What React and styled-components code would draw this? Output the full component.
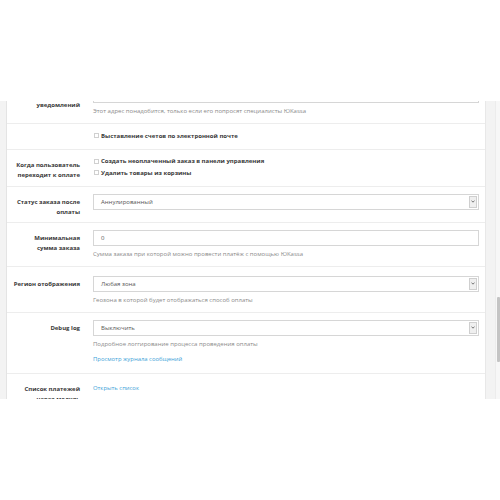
import React from 'react';
import styled, { createGlobalStyle } from 'styled-components';

const Global = createGlobalStyle`
  html, body { margin: 0; padding: 0; background: #fff; }
  body { font-family: "Open Sans", "Noto Sans", sans-serif; }
`;

const Page = styled.div`
  width: 500px;
  height: 500px;
  padding-top: 101px;
  box-sizing: border-box;
  background: #fff;
`;

const Frame = styled.div`
  height: 298px;
  display: flex;
  background: #f3f3f3;
  overflow: hidden;
`;

const Gutter = styled.div`
  width: 6px;
  flex: none;
`;

const Panel = styled.div`
  flex: none;
  width: 480px;
  box-sizing: border-box;
  background: #fff;
  border-left: 1px solid #e4e4e4;
  border-right: 1px solid #e8e8e8;
  overflow: hidden;
`;

const Scroller = styled.div`
  margin-top: -21px;
`;

const Side = styled.div`
  flex: 1;
  display: flex;
  justify-content: flex-end;
`;

const Track = styled.div`
  width: 4px;
  background: #f7f7f7;
  border-left: 1px solid #ececec;
  display: flex;
  flex-direction: column;
  padding-top: 196px;
`;

const Thumb = styled.div`
  width: 3px;
  height: 65px;
  margin-left: 1px;
  background: #c4c4c4;
  border-radius: 1px;
`;

const Row = styled.div`
  display: grid;
  grid-template-columns: 73px 1fr;
  column-gap: 13px;
  padding: ${(p) => p.$top ?? 6}px 6px 5px 0;
  border-bottom: 1px solid #ededed;
`;

const Label = styled.div`
  text-align: right;
  font-weight: 700;
  font-size: 6px;
  line-height: 10px;
  padding-top: 4px;
  color: #383838;
`;

const Control = styled.div`
  display: flex;
  flex-direction: column;
  min-width: 0;
`;

const Field = styled.div`
  height: 16px;
  margin-top: 1px;
  box-sizing: border-box;
  border: 1px solid #d6d6d6;
  background: #fff;
  display: flex;
  align-items: center;
  font-size: 6px;
  color: #555;
`;

const FieldValue = styled.span`
  flex: 1;
  padding-left: 7px;
`;

const Arrow = styled.span`
  width: 8px;
  height: 12px;
  margin-right: 1px;
  box-sizing: border-box;
  border: 1px solid #cfcfcf;
  background: #efefef;
  display: flex;
  align-items: center;
  justify-content: center;
`;

const Help = styled.div`
  font-size: 6px;
  line-height: 10px;
  color: #8a8a8a;
  margin: 3px 0 2px;
`;

const Link = styled.a`
  font-size: 5.9px;
  line-height: 10px;
  color: #3d9fd8;
  text-decoration: none;
  margin: 3px 0 4px;
`;

const Checks = styled.div`
  display: flex;
  flex-direction: column;
  margin-bottom: 2px;
`;

const Check = styled.label`
  display: flex;
  align-items: center;
  height: 11.5px;
  font-size: 6px;
  font-weight: 700;
  color: #383838;
`;

const Box = styled.span`
  width: 5px;
  height: 5px;
  box-sizing: border-box;
  border: 1px solid #d0d0d0;
  background: #fff;
  margin: 0 2px 0 1px;
  flex: none;
`;

const Chevron = () => (
  <svg width="4" height="3" viewBox="0 0 4 3">
    <path d="M0.5 0.6 L2 2.2 L3.5 0.6" fill="none" stroke="#555" strokeWidth="0.8" />
  </svg>
);

const Select = ({ value }) => (
  <Field>
    <FieldValue>{value}</FieldValue>
    <Arrow>
      <Chevron />
    </Arrow>
  </Field>
);

const Input = ({ value }) => (
  <Field>
    <FieldValue>{value}</FieldValue>
  </Field>
);

export default function App() {
  return (
    <Page>
      <Global />
      <Frame>
        <Gutter />
        <Panel>
          <Scroller>
            <Row>
              <Label>Email для<br />уведомлений</Label>
              <Control>
                <Input value="" />
                <Help>Этот адрес понадобится, только если его попросят специалисты ЮKassa</Help>
              </Control>
            </Row>
            <Row>
              <Label />
              <Control>
                <Checks>
                  <Check><Box />Выставление счетов по электронной почте</Check>
                </Checks>
              </Control>
            </Row>
            <Row>
              <Label>Когда пользователь<br />переходит к оплате</Label>
              <Control>
                <Checks>
                  <Check><Box />Создать неоплаченный заказ в панели управления</Check>
                  <Check><Box />Удалить товары из корзины</Check>
                </Checks>
              </Control>
            </Row>
            <Row>
              <Label>Статус заказа после<br />оплаты</Label>
              <Control>
                <Select value="Аннулированный" />
              </Control>
            </Row>
            <Row>
              <Label>Минимальная<br />сумма заказа</Label>
              <Control>
                <Input value="0" />
                <Help>Сумма заказа при которой можно провести платёж с помощью ЮKassa</Help>
              </Control>
            </Row>
            <Row $top={8}>
              <Label>Регион отображения</Label>
              <Control>
                <Select value="Любая зона" />
                <Help>Геозона в которой будет отображаться способ оплаты</Help>
              </Control>
            </Row>
            <Row>
              <Label>Debug log</Label>
              <Control>
                <Select value="Выключить" />
                <Help>Подробное логгирование процесса проведения оплаты</Help>
                <Link href="#">Просмотр журнала сообщений</Link>
              </Control>
            </Row>
            <Row>
              <Label>Список платежей<br />через модуль</Label>
              <Control>
                <Link href="#">Открыть список</Link>
              </Control>
            </Row>
          </Scroller>
        </Panel>
        <Side>
          <Track>
            <Thumb />
          </Track>
        </Side>
      </Frame>
    </Page>
  );
}
